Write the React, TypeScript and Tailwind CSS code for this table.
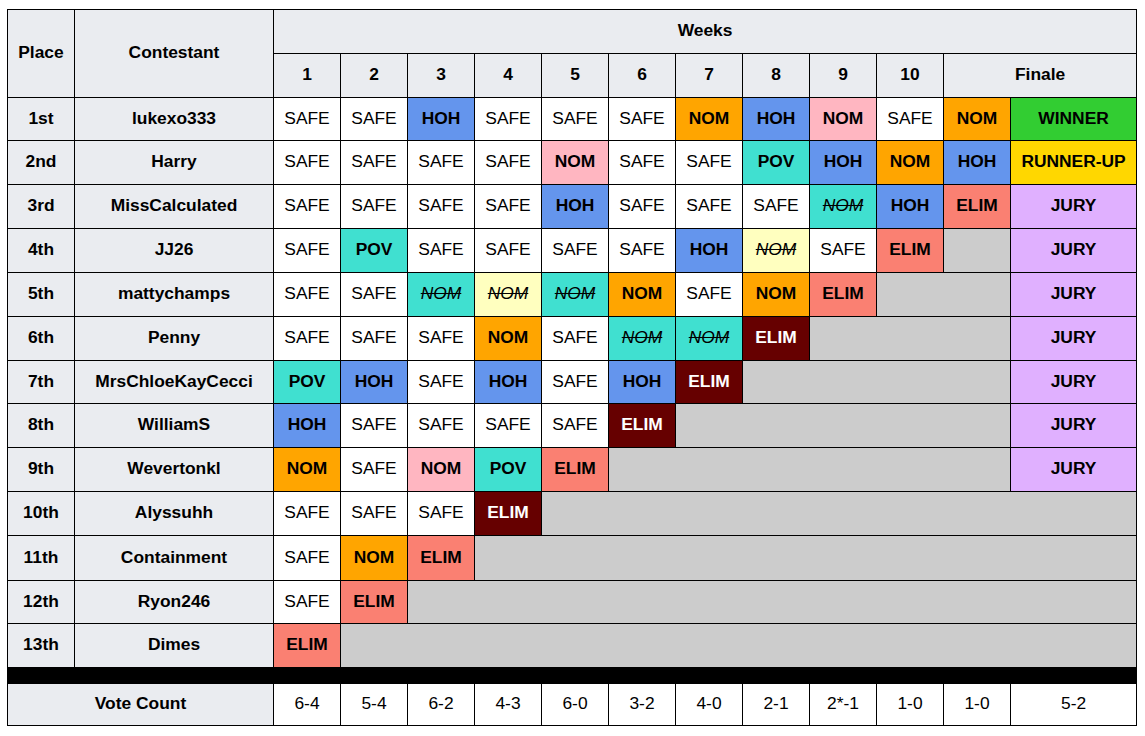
import React from 'react';

type Cell = { t: string; kind?: string; span?: number };

// cell styles by status
const STYLE: Record<string, string> = {
  safe: 'bg-white font-normal',
  hoh: 'bg-[#6495ed] font-bold',
  nom: 'bg-[#ffa500] font-bold',
  nomPink: 'bg-[#ffb6c1] font-bold',
  pov: 'bg-[#40e0d0] font-bold',
  elim: 'bg-[#fa8072] font-bold',
  elimDark: 'bg-[#660000] font-bold text-white',
  winner: 'bg-[#32cd32] font-bold',
  runner: 'bg-[#ffd700] font-bold',
  jury: 'bg-[#e0b0ff] font-bold',
  strikeTurq: 'bg-[#40e0d0] font-normal',
  strikeYellow: 'bg-[#ffffbf] font-normal',
  grey: 'bg-[#cccccc]',
};

const S: Cell = { t: 'SAFE', kind: 'safe' };
const H: Cell = { t: 'HOH', kind: 'hoh' };
const N: Cell = { t: 'NOM', kind: 'nom' };
const NP: Cell = { t: 'NOM', kind: 'nomPink' };
const P: Cell = { t: 'POV', kind: 'pov' };
const E: Cell = { t: 'ELIM', kind: 'elim' };
const ED: Cell = { t: 'ELIM', kind: 'elimDark' };
const NT: Cell = { t: 'NOM', kind: 'strikeTurq' };
const NY: Cell = { t: 'NOM', kind: 'strikeYellow' };
const J: Cell = { t: 'JURY', kind: 'jury' };
const G = (span: number): Cell => ({ t: '', kind: 'grey', span });

const rows: { place: string; name: string; h: string; cells: Cell[] }[] = [
  { place: '1st', name: 'lukexo333', h: 'h-[43px]', cells: [S, S, H, S, S, S, N, H, NP, S, N, { t: 'WINNER', kind: 'winner' }] },
  { place: '2nd', name: 'Harry', h: 'h-[44px]', cells: [S, S, S, S, NP, S, S, P, H, N, H, { t: 'RUNNER-UP', kind: 'runner' }] },
  { place: '3rd', name: 'MissCalculated', h: 'h-[44px]', cells: [S, S, S, S, H, S, S, S, NT, H, E, J] },
  { place: '4th', name: 'JJ26', h: 'h-[44px]', cells: [S, P, S, S, S, S, H, NY, S, E, G(1), J] },
  { place: '5th', name: 'mattychamps', h: 'h-[44px]', cells: [S, S, NT, NY, NT, N, S, N, E, G(2), J] },
  { place: '6th', name: 'Penny', h: 'h-[44px]', cells: [S, S, S, N, S, NT, NT, ED, G(3), J] },
  { place: '7th', name: 'MrsChloeKayCecci', h: 'h-[43px]', cells: [P, H, S, H, S, H, ED, G(4), J] },
  { place: '8th', name: 'WilliamS', h: 'h-[44px]', cells: [H, S, S, S, S, ED, G(5), J] },
  { place: '9th', name: 'Wevertonkl', h: 'h-[44px]', cells: [N, S, NP, P, E, G(6), J] },
  { place: '10th', name: 'Alyssuhh', h: 'h-[44px]', cells: [S, S, S, ED, G(8)] },
  { place: '11th', name: 'Containment', h: 'h-[45px]', cells: [S, N, E, G(9)] },
  { place: '12th', name: 'Ryon246', h: 'h-[43px]', cells: [S, E, G(10)] },
  { place: '13th', name: 'Dimes', h: 'h-[44px]', cells: [E, G(11)] },
];

const votes = ['6-4', '5-4', '6-2', '4-3', '6-0', '3-2', '4-0', '2-1', '2*-1', '1-0', '1-0', '5-2'];

const bd = 'border border-black pb-[2px]';
const head = `${bd} bg-[#eaecf0] font-bold text-center`;

export default function App() {
  return (
    <div className="bg-white min-h-screen pt-[9px] pl-[7px] text-black font-['Liberation_Sans',Arial,sans-serif] text-[17.4px]">
      <table className="border-collapse w-[1130px] table-fixed text-center">
        <colgroup>
          <col className="w-[67px]" />
          <col className="w-[199px]" />
          {Array.from({ length: 11 }).map((_, i) => (
            <col key={i} className="w-[67px]" />
          ))}
          <col className="w-[126px]" />
        </colgroup>
        <thead>
          <tr className="h-[44px]">
            <th rowSpan={2} className={head}>Place</th>
            <th rowSpan={2} className={head}>Contestant</th>
            <th colSpan={12} className={head}>Weeks</th>
          </tr>
          <tr className="h-[44px]">
            {Array.from({ length: 10 }).map((_, i) => (
              <th key={i} className={head}>{i + 1}</th>
            ))}
            <th colSpan={2} className={head}>Finale</th>
          </tr>
        </thead>
        <tbody>
          {rows.map((r) => (
            <tr key={r.place} className={r.h}>
              <td className={head}>{r.place}</td>
              <td className={head}>{r.name}</td>
              {r.cells.map((c, i) => (
                <td key={i} colSpan={c.span} className={`${bd} ${STYLE[c.kind || 'safe']}`}>
                  {c.kind === 'strikeTurq' || c.kind === 'strikeYellow' ? (
                    <s>
                      <i>{c.t}</i>
                    </s>
                  ) : (
                    c.t
                  )}
                </td>
              ))}
            </tr>
          ))}
          <tr className="h-[16px]">
            <td colSpan={14} className="border border-black bg-black p-0" />
          </tr>
          <tr className="h-[42px]">
            <td colSpan={2} className={head}>Vote Count</td>
            {votes.map((v, i) => (
              <td key={i} className={`${bd} bg-white`}>{v}</td>
            ))}
          </tr>
        </tbody>
      </table>
    </div>
  );
}
